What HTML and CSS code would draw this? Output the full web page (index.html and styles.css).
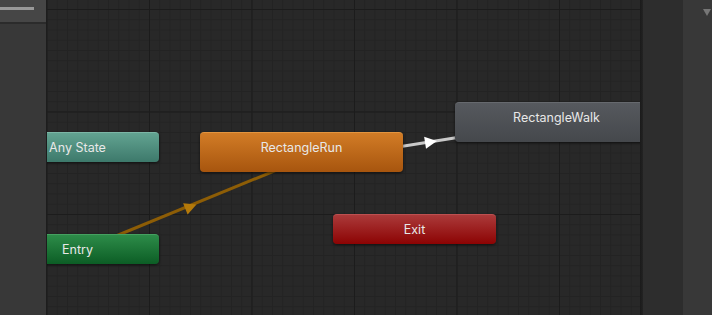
FILE: index.html
```html
<!DOCTYPE html>
<html lang="en">
<head>
  <meta charset="UTF-8" />
  <title>Animator</title>
  <link rel="stylesheet" href="styles.css">
</head>
<body>
  <div class="window">
    <div class="layers">
      <div class="layers-head"><span class="layers-bar"></span></div>
      <div class="layers-body"></div>
    </div>

    <div class="graph">
      <svg class="links" width="593" height="315" viewBox="0 0 593 315">
        <line x1="30" y1="252" x2="254" y2="160" stroke="#8d5d06" stroke-width="3" />
        <polygon points="7,0 -5,-6 -5,6" fill="#b57a0a" transform="translate(143 207) rotate(-22)" />
        <line x1="343" y1="148.2" x2="423" y2="135.6" stroke="#c9c9c9" stroke-width="3" />
        <polygon points="7,0 -5,-6 -5,6" fill="#ffffff" transform="translate(383 142) rotate(-9)" />
      </svg>

      <div class="node node-any">Any State</div>
      <div class="node node-entry">Entry</div>
      <div class="node node-big node-run">RectangleRun</div>
      <div class="node node-big node-walk">RectangleWalk</div>
      <div class="node node-exit">Exit</div>
    </div>

    <div class="split"></div>
    <div class="side"></div>
    <div class="side-right"><span class="drop"></span></div>
  </div>
</body>
</html>
```

FILE: styles.css
```css
html, body {
  margin: 0;
  padding: 0;
  background: #282828;
  overflow: hidden;
}
.window {
  display: flex;
  width: 712px;
  height: 315px;
  font-family: Inter, "Noto Sans", sans-serif;
}
.layers {
  width: 46px;
  border-right: 1px solid #1d1d1d;
  display: flex;
  flex-direction: column;
  background: #383838;
}
.layers-head {
  height: 24px;
  background: #464646;
  border-bottom: 2px solid #2b2b2b;
  box-sizing: border-box;
  padding-top: 7px;
}
.layers-bar {
  display: block;
  width: 34px;
  height: 3px;
  background: #999;
}
.layers-body {
  flex: 1;
}
.graph {
  position: relative;
  width: 593px;
  overflow: hidden;
  background-color: #282828;
  background-image:
    linear-gradient(to right, #1c1c1c 1px, transparent 1px),
    linear-gradient(to bottom, #1c1c1c 1px, transparent 1px),
    linear-gradient(to right, #232323 1px, transparent 1px),
    linear-gradient(to bottom, #232323 1px, transparent 1px);
  background-size: 102.5px 102.5px, 102.5px 102.5px, 10.25px 10.25px, 10.25px 10.25px;
  background-position: 102px 9px, 102px 9px, 9.75px 9px, 9.75px 9px;
}
.links {
  position: absolute;
  left: 0;
  top: 0;
}
.node {
  position: absolute;
  width: 163px;
  height: 30px;
  line-height: 30px;
  box-sizing: border-box;
  border-radius: 4px;
  text-align: center;
  font-size: 12.5px;
  color: #e8e8e8;
  box-shadow: 0 1px 3px rgba(0, 0, 0, 0.6);
}
.node-big {
  width: 203px;
  height: 40px;
  line-height: 30px;
}
.node-any {
  left: -51px;
  top: 132px;
  background: linear-gradient(#62a391, #3d796b);
  border-top: 1px solid #7cb6a6;
}
.node-entry {
  left: -51px;
  top: 234px;
  background: linear-gradient(#2d8c49, #0c5d25);
  border-top: 1px solid #45a060;
}
.node-run {
  left: 153px;
  top: 132px;
  background: linear-gradient(#d27c26, #a7550e);
  border-top: 1px solid #e3953f;
}
.node-walk {
  left: 408px;
  top: 102px;
  background: linear-gradient(#56595e, #45484c);
  border-top: 1px solid #66696e;
}
.node-exit {
  left: 286px;
  top: 214px;
  background: linear-gradient(#ab3a3a, #8c0303);
  border-top: 1px solid #bd5050;
}
.split {
  width: 3px;
  background: linear-gradient(to right, #1a1a1a, #232323);
}
.side {
  width: 40px;
  background: #2d2d2d;
}
.side-right {
  flex: 1;
  background: #383838;
  position: relative;
}
.drop {
  position: absolute;
  left: 20px;
  top: 9px;
  width: 0;
  height: 0;
  border-left: 4px solid transparent;
  border-right: 4px solid transparent;
  border-top: 7px solid #767676;
}
```
